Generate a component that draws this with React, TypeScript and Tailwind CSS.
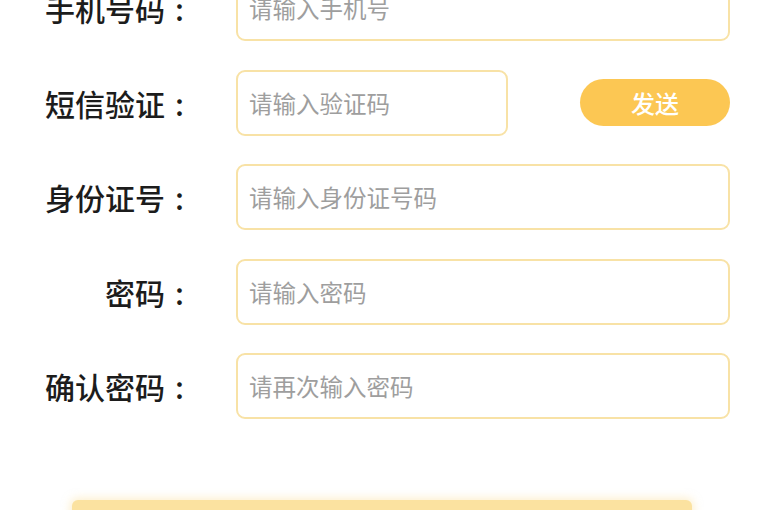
import React from "react";

const font = { fontFamily: '"Noto Sans CJK SC", "Noto Sans", sans-serif' };

function Row({ label, placeholder, send }: { label: string; placeholder: string; send?: boolean }) {
  return (
    <div className="flex items-center h-[66px]">
      <div className="w-[184px] flex justify-end items-center text-[30px] leading-none font-medium text-[#1c1c1c]">
        <span>{label}</span>
        <span className="ml-[10px]">:</span>
      </div>
      <div className="ml-[52px] flex-1 flex items-center">
        <input
          className={
            (send ? "w-[272px]" : "flex-1") +
            " h-[66px] rounded-[9px] border-2 border-[#f8e2a6] bg-white pl-[11px] text-[23.5px] text-[#333] placeholder:text-[#9e9e9e] outline-none"
          }
          placeholder={placeholder}
          style={font}
        />
        {send && (
          <button className="ml-[72px] w-[150px] h-[47px] rounded-full bg-[#fcc753] text-white text-[24px] leading-none font-medium">
            发送
          </button>
        )}
      </div>
    </div>
  );
}

export default function App() {
  return (
    <div className="w-[768px] h-[510px] overflow-hidden bg-white" style={font}>
      <div className="flex flex-col gap-[28.5px] -mt-[25px] pr-[38px]">
        <Row label="手机号码" placeholder="请输入手机号" />
        <Row label="短信验证" placeholder="请输入验证码" send />
        <Row label="身份证号" placeholder="请输入身份证号码" />
        <Row label="密码" placeholder="请输入密码" />
        <Row label="确认密码" placeholder="请再次输入密码" />
      </div>
      <div className="mt-[81px] ml-[72px] w-[620px] h-[60px] rounded-[6px] bg-[#fbe2a0] shadow-[0_0_8px_2px_rgba(251,226,160,0.5)]" />
    </div>
  );
}
